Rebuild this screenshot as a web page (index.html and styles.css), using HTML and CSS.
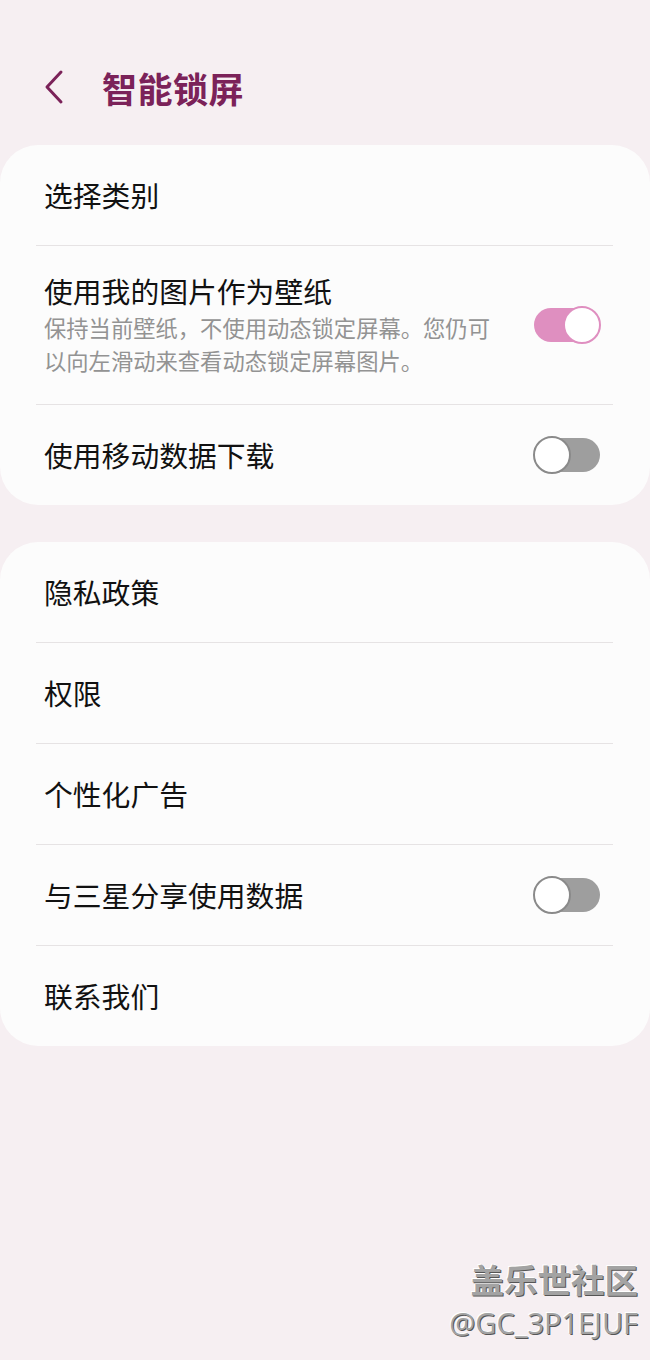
FILE: index.html
```html
<!DOCTYPE html>
<html lang="zh-CN">
<head>
    <meta charset="UTF-8">
    <meta name="viewport" content="width=device-width, initial-scale=1.0">
    <title>智能锁屏</title>
    <link rel="stylesheet" href="styles.css">
</head>
<body>

    <header class="top-bar">
        <svg class="back-icon" width="24" height="36" viewBox="0 0 24 36">
            <path d="M19 3 L5 18 L19 33" fill="none" stroke="#7b2259" stroke-width="3" stroke-linecap="round" stroke-linejoin="round"/>
        </svg>
        <h1 class="page-title">智能锁屏</h1>
    </header>

    <section class="card">
        <div class="row">
            <div class="row-text"><div class="row-title">选择类别</div></div>
        </div>
        <div class="divider"></div>
        <div class="row row-tall">
            <div class="row-text">
                <div class="row-title">使用我的图片作为壁纸</div>
                <div class="row-sub">保持当前壁纸，不使用动态锁定屏幕。您仍可以向左滑动来查看动态锁定屏幕图片。</div>
            </div>
            <div class="toggle on"><span class="thumb"></span></div>
        </div>
        <div class="divider"></div>
        <div class="row">
            <div class="row-text"><div class="row-title">使用移动数据下载</div></div>
            <div class="toggle"><span class="thumb"></span></div>
        </div>
    </section>

    <section class="card">
        <div class="row">
            <div class="row-text"><div class="row-title">隐私政策</div></div>
        </div>
        <div class="divider"></div>
        <div class="row">
            <div class="row-text"><div class="row-title">权限</div></div>
        </div>
        <div class="divider"></div>
        <div class="row">
            <div class="row-text"><div class="row-title">个性化广告</div></div>
        </div>
        <div class="divider"></div>
        <div class="row">
            <div class="row-text"><div class="row-title">与三星分享使用数据</div></div>
            <div class="toggle"><span class="thumb"></span></div>
        </div>
        <div class="divider"></div>
        <div class="row">
            <div class="row-text"><div class="row-title">联系我们</div></div>
        </div>
    </section>

    <div class="watermark">
        <div class="wm-main">盖乐世社区</div>
        <div class="wm-id">@GC_3P1EJUF</div>
    </div>

</body>
</html>
```

FILE: styles.css
```css
body {
    margin: 0;
    padding: 0;
    width: 650px;
    height: 1360px;
    background-color: #f6eff2;
    font-family: "Noto Sans CJK SC", "Noto Sans", sans-serif;
    color: #111;
    position: relative;
    overflow: hidden;
}

.top-bar {
    display: flex;
    align-items: center;
    height: 54px;
    padding: 60px 0 0 42px;
    margin-bottom: 31px;
}

.back-icon {
    display: block;
}

.page-title {
    margin: 0 0 0 36px;
    font-size: 35px;
    font-weight: 700;
    color: #7b2259;
    letter-spacing: 0.5px;
}

.card {
    background-color: #fcfcfc;
    border-radius: 38px;
    margin-bottom: 37px;
}

.row {
    display: flex;
    align-items: center;
    height: 100px;
    padding: 0 50px 0 44px;
    box-sizing: border-box;
}

.row-tall {
    height: 158px;
}

.row-text {
    flex: 1;
}

.row-title {
    font-size: 28.8px;
    line-height: 36px;
}

.row-sub {
    font-size: 22.3px;
    line-height: 33px;
    color: #939393;
    width: 452px;
    margin-top: 2px;
}

.divider {
    height: 1px;
    background-color: #e6e3e4;
    margin: 0 37px 0 36px;
}

/* switches */
.toggle {
    position: relative;
    width: 66px;
    height: 34px;
    border-radius: 17px;
    background-color: #9e9e9e;
    flex-shrink: 0;
    margin-left: 20px;
}

.toggle .thumb {
    position: absolute;
    top: -2px;
    left: -1px;
    width: 34px;
    height: 34px;
    border-radius: 50%;
    background-color: #fff;
    border: 2px solid #8a8a8a;
}

.toggle.on {
    background-color: #df8fc0;
}

.toggle.on .thumb {
    left: auto;
    right: -1px;
    border-color: #df8fc0;
}

.watermark {
    position: absolute;
    right: 12px;
    bottom: 16px;
    text-align: right;
    color: #a3a3a3;
    text-shadow: 1px 1px 0 #555, -1px -1px 0 #fff;
}

.wm-main {
    font-size: 33.5px;
    font-weight: 700;
    line-height: 46px;
}

.wm-id {
    font-family: "Open Sans", "Noto Sans", sans-serif;
    font-size: 29px;
    line-height: 42px;
}
```
